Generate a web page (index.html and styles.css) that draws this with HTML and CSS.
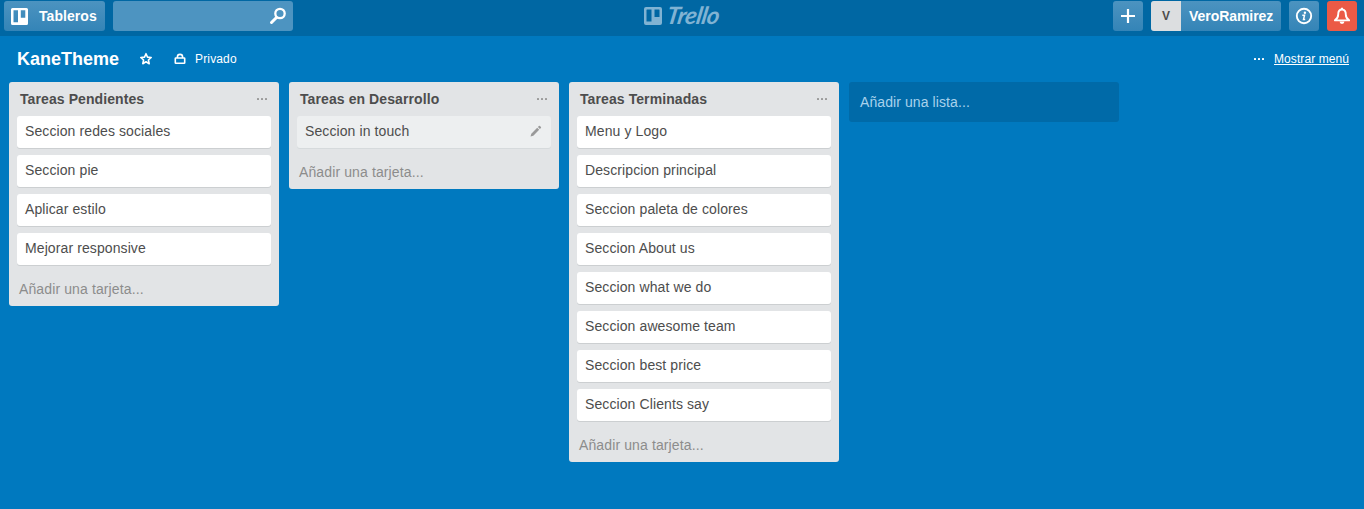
FILE: index.html
```html
<!DOCTYPE html>
<html lang="es">
<head>
<meta charset="utf-8">
<title>KaneTheme | Trello</title>
<link rel="stylesheet" href="styles.css">
</head>
<body>
<header class="header">
  <div class="header-side">
    <button class="btn boards-btn">
      <svg width="17" height="17" viewBox="0 0 17 17"><path fill="#fff" fill-rule="evenodd" d="M1.500 0h14A1.500 1.500 0 0 1 17 1.500v14a1.500 1.500 0 0 1-1.500 1.500h-14A1.500 1.500 0 0 1 0 15.500v-14A1.500 1.500 0 0 1 1.500 0zM2.500 2.200v12h4.500v-12zM9.800 2.200v7.500h4.500V2.200z"/></svg>
      <span>Tableros</span>
    </button>
    <div class="search">
      <svg width="18" height="18" viewBox="0 0 18 18" fill="none" stroke="#fff"><circle cx="11" cy="6.500" r="4.700" stroke-width="2.300"/><path d="M7.500 10.500L2.500 15.500" stroke-width="3" stroke-linecap="round"/></svg>
    </div>
  </div>
  <div class="logo">
    <svg width="18" height="18" viewBox="0 0 18 18"><path fill="#80b3d3" fill-rule="evenodd" d="M2 0h14a2 2 0 0 1 2 2v14a2 2 0 0 1-2 2H2a2 2 0 0 1-2-2V2A2 2 0 0 1 2 0zM3 2.500a.5.5 0 0 0-.5.5v11.500h5V2.500zM10.500 2.500v7.500h5V3a.5.5 0 0 0-.5-.5z"/></svg>
    <span class="wordmark">Trello</span>
  </div>
  <div class="header-side">
    <button class="btn square"><svg width="16" height="16" viewBox="0 0 16 16"><path d="M8 1v14M1 8h14" stroke="#fff" stroke-width="2.200"/></svg></button>
    <button class="btn user"><span class="avatar">V</span><span class="username">VeroRamirez</span></button>
    <button class="btn square"><svg width="18" height="18" viewBox="0 0 18 18"><circle cx="9" cy="9" r="7.200" fill="none" stroke="#fff" stroke-width="1.900"/><circle cx="9.900" cy="5.700" r="1.200" fill="#fff"/><path d="M7.300 8.300h2.200l-1 4.200h1.700" fill="none" stroke="#fff" stroke-width="1.500"/></svg></button>
    <button class="btn square alert"><svg width="18" height="18" viewBox="0 0 18 18" fill="none" stroke="#fff"><path d="M9 2.500C6 2.500 5.200 5 5.200 7.500c0 3-.9 4.200-3.300 5.900h14.200c-2.400-1.700-3.300-2.900-3.300-5.900C12.800 5 12 2.500 9 2.500z" stroke-width="1.900" stroke-linejoin="round"/><path d="M9 .8v1.700" stroke-width="2"/><path d="M6.600 14.500a2.400 2.400 0 0 0 4.800 0z" fill="#fff" stroke="none"/></svg></button>
  </div>
</header>

<nav class="board-bar">
  <h1 class="board-name">KaneTheme</h1>
  <svg class="star" width="14" height="14" viewBox="0 0 14 14"><path d="M7 1.700l1.500 3.400 3.700.4-2.800 2.500.8 3.700L7 9.800l-3.200 1.900.8-3.700L1.800 5.500l3.700-.4z" fill="none" stroke="#fff" stroke-width="1.600" stroke-linejoin="round"/></svg>
  <svg class="lock" width="12" height="12" viewBox="0 0 12 12" fill="none" stroke="#fff" stroke-width="1.600"><rect x="1.300" y="5" width="9.400" height="5.200" rx=".5"/><path d="M3.400 5V4a2.600 2.600 0 0 1 5.200 0v1"/></svg>
  <span class="privacy">Privado</span>
  <span class="menu-dots dots"><i></i><i></i><i></i></span>
  <a class="menu-link">Mostrar menú</a>
</nav>

<main class="board">
  <section class="list">
    <div class="list-head"><h2>Tareas Pendientes</h2><span class="dots"><i></i><i></i><i></i></span></div>
    <div class="cards">
      <div class="card">Seccion redes sociales</div>
      <div class="card">Seccion pie</div>
      <div class="card">Aplicar estilo</div>
      <div class="card">Mejorar responsive</div>
    </div>
    <div class="add-card">Añadir una tarjeta...</div>
  </section>
  <section class="list">
    <div class="list-head"><h2>Tareas en Desarrollo</h2><span class="dots"><i></i><i></i><i></i></span></div>
    <div class="cards">
      <div class="card active"><span>Seccion in touch</span><svg width="12" height="12" viewBox="0 0 12 12" fill="#999"><path d="M.5 11.500l.8-2.800 5.900-5.900 2 2-5.900 5.900zM7.900 2.100l1-1a.8.8 0 0 1 1.100 0l.9.900a.8.8 0 0 1 0 1.100l-1 1z"/></svg></div>
    </div>
    <div class="add-card">Añadir una tarjeta...</div>
  </section>
  <section class="list">
    <div class="list-head"><h2>Tareas Terminadas</h2><span class="dots"><i></i><i></i><i></i></span></div>
    <div class="cards">
      <div class="card">Menu y Logo</div>
      <div class="card">Descripcion principal</div>
      <div class="card">Seccion paleta de colores</div>
      <div class="card">Seccion About us</div>
      <div class="card">Seccion what we do</div>
      <div class="card">Seccion awesome team</div>
      <div class="card">Seccion best price</div>
      <div class="card">Seccion Clients say</div>
    </div>
    <div class="add-card">Añadir una tarjeta...</div>
  </section>
  <div class="add-list">Añadir una lista...</div>
</main>
</body>
</html>
```
FILE: styles.css
```css
* { box-sizing: border-box; }
body {
  margin: 0;
  height: 509px;
  overflow: hidden;
  background: #0079bf;
  color: #4d4d4d;
  font: 14px/18px "Liberation Sans", Arial, sans-serif;
}
svg { display: block; flex: none; }
h1, h2 { margin: 0; }

.header {
  display: grid;
  grid-template-columns: 1fr auto 1fr;
  height: 36px;
  padding: 1px 7px 0 4px;
  background: #0067a3;
}
.header-side { display: flex; gap: 8px; }
.header-side:last-child { justify-content: flex-end; }
.btn {
  display: flex;
  align-items: center;
  height: 30px;
  padding: 0;
  border: 0;
  border-radius: 3px;
  background: linear-gradient(#4c93c0, #3484b7);
  color: #fff;
  font: bold 14px/30px "Liberation Sans", Arial, sans-serif;
}
.boards-btn { width: 101px; padding-left: 7px; gap: 11px; letter-spacing: 0.050px; }
.search {
  display: flex;
  align-items: center;
  justify-content: flex-end;
  width: 180px;
  height: 30px;
  padding-right: 6px;
  border-radius: 3px;
  background: #4d94c1;
}
.square { width: 30px; justify-content: center; }
.alert { background: #eb5a46; }
.user { width: 130px; overflow: hidden; }
.avatar {
  width: 30px;
  background: #dcdee0;
  color: #4d4d4d;
  font-size: 12px;
  text-align: center;
}
.username { margin-left: 8px; letter-spacing: -0.050px; }
.logo { display: flex; gap: 4px; padding-top: 6px; margin-left: 3px; }
.wordmark {
  width: 54px;
  color: #80b3d3;
  font: italic bold 24px/16px Lato, "Liberation Sans", sans-serif;
  letter-spacing: -0.500px;
  transform: skewX(-10deg);
}

.board-bar {
  display: flex;
  align-items: center;
  height: 46px;
  padding: 0 15px 0 17px;
  color: #fff;
  font-size: 12px;
}
.board-name { font-size: 18px; line-height: 24px; }
.star { margin-left: 20px; }
.lock { margin-left: 21px; }
.privacy { margin-left: 9px; letter-spacing: 0.140px; }
.dots { display: flex; gap: 2px; color: #999; }
.dots i { width: 2px; height: 2px; border-radius: 0.500px; background: currentColor; }
.menu-dots { margin-left: auto; color: #fff; }
.menu-link { margin-left: 10px; text-decoration: underline; letter-spacing: 0.080px; }

.board { display: flex; align-items: flex-start; gap: 10px; padding-left: 9px; }
.list {
  width: 270px;
  padding: 0 8px;
  border-radius: 3px;
  background: #e2e4e6;
}
.list-head {
  display: flex;
  align-items: center;
  justify-content: space-between;
  height: 34px;
  padding: 0 4px 0 3px;
}
.list-head h2 { font-size: 14px; line-height: 18px; letter-spacing: 0.090px; }
.cards { display: grid; gap: 7px; letter-spacing: 0.100px; }
.card {
  display: flex;
  justify-content: space-between;
  height: 32px;
  padding: 6px 8px;
  border-radius: 3px;
  background: #fff;
  box-shadow: 0 1px 0 #cccfd1;
}
.card.active { background: #edeff0; box-shadow: 0 1px 0 #d6dadc; }
.card.active svg { margin: 3px 1px 0 0; }
.add-card { height: 41px; padding: 15px 2px 0; color: #8c8c8c; letter-spacing: 0.120px; }
.add-list {
  width: 270px;
  height: 40px;
  padding: 11px;
  border-radius: 3px;
  background: #006aa8;
  color: #a8d2ec;
  letter-spacing: 0.090px;
}
```
